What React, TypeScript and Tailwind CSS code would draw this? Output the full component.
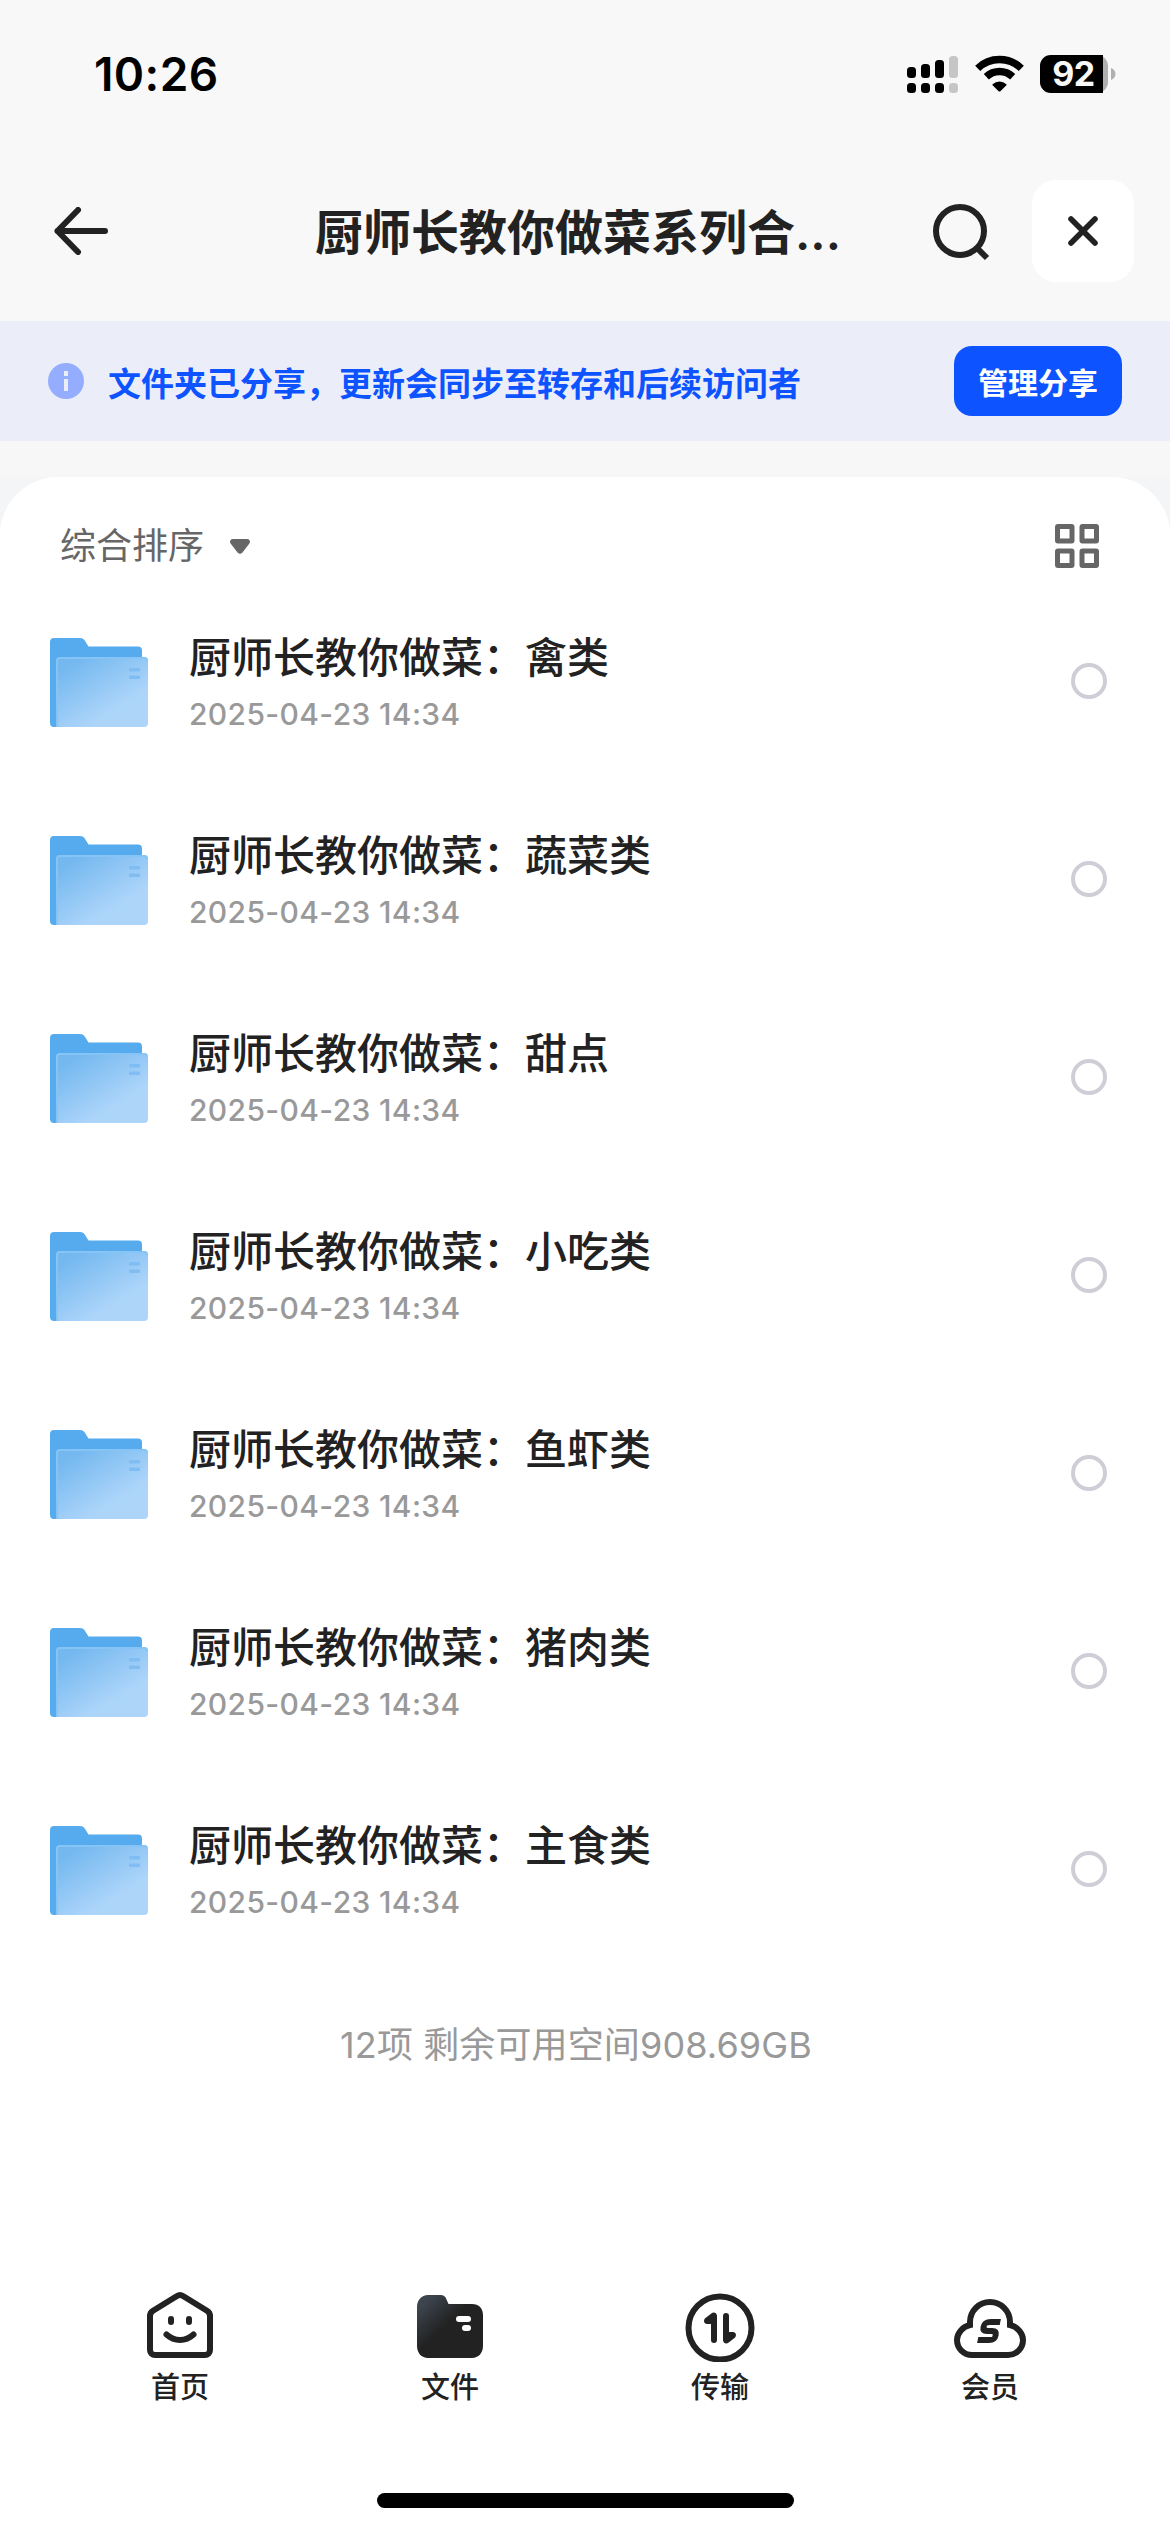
import React from "react";

const INK = "#222222";

function SignalIcon() {
  return (
    <svg width="52" height="38" viewBox="0 0 52 38">
      <rect x="0" y="12" width="9" height="11" rx="3.5" />
      <rect x="14" y="9" width="9" height="14" rx="3.5" />
      <rect x="28" y="5" width="9" height="18" rx="3.5" />
      <rect x="42" y="1" width="9" height="22" rx="3.5" fill="#c6c6c6" />
      <rect x="0" y="28" width="9" height="10" rx="3.5" />
      <rect x="14" y="28" width="9" height="10" rx="3.5" />
      <rect x="28" y="28" width="9" height="10" rx="3.5" />
      <rect x="42" y="28" width="9" height="10" rx="3.5" fill="#c6c6c6" />
    </svg>
  );
}

function WifiIcon() {
  return (
    <svg width="50" height="38" viewBox="0 0 50 38">
      <path d="M2.7 13.3a31.5 31.5 0 0 1 43.6 0" fill="none" stroke="#000" strokeWidth="7.4" />
      <path d="M11.3 21.8a19.2 19.2 0 0 1 26.4 0" fill="none" stroke="#000" strokeWidth="7.4" />
      <path d="M17.6 29.2a10.2 10.2 0 0 1 13.8 0c.4.4.3.7 0 1.1l-6 5.9c-.6.5-1.2.5-1.8 0l-6-5.9c-.3-.4-.4-.7 0-1.1z" />
    </svg>
  );
}

function Battery() {
  return (
    <div className="flex items-center gap-[3px]">
      <div className="flex h-[38px] w-[68px] items-center rounded-[11px] bg-[#b0b0b0]">
        <div className="flex h-[38px] w-[63px] items-center justify-center rounded-l-[11px] bg-black pl-[4px] font-[Inter,sans-serif] text-[34px] font-bold leading-[38px] tracking-[-0.5px] text-[#f8f8f8]">
          92
        </div>
      </div>
      <svg width="5" height="12" viewBox="0 0 5 12">
        <path d="M0 0c2.600 1 4.500 3.200 4.500 6s-1.900 5-4.500 6z" fill="#b0b0b0" />
      </svg>
    </div>
  );
}

function BackIcon() {
  return (
    <svg width="54" height="48" viewBox="0 0 54 48" fill="none" stroke={INK} strokeWidth="6" strokeLinecap="round" strokeLinejoin="round">
      <path d="M51 24H3.500M24 3 3.500 24 24 45" />
    </svg>
  );
}

function SearchIcon() {
  return (
    <svg width="58" height="58" viewBox="0 0 58 58" fill="none" stroke={INK} strokeWidth="6">
      <circle cx="27" cy="27" r="24" />
      <path d="m44 44 10 10" />
    </svg>
  );
}

function CloseIcon() {
  return (
    <svg width="30" height="30" viewBox="0 0 30 30" fill="none" stroke={INK} strokeWidth="5.600" strokeLinecap="round">
      <path d="m3 3 24 24M27 3 3 27" />
    </svg>
  );
}

function InfoIcon() {
  return (
    <svg width="36" height="36" viewBox="0 0 36 36">
      <circle cx="18" cy="18" r="18" fill="#94adff" />
      <rect x="16" y="8" width="4" height="5" fill="#ebeef9" />
      <rect x="16" y="16" width="4" height="12" fill="#ebeef9" />
    </svg>
  );
}

function GridIcon() {
  return (
    <svg width="44" height="44" viewBox="0 0 44 44" fill="none" stroke="#666" strokeWidth="5">
      <rect x="2.500" y="2.500" width="14.500" height="14.500" rx="0.500" />
      <rect x="27" y="2.500" width="14.500" height="14.500" rx="0.500" />
      <rect x="2.500" y="27" width="14.500" height="14.500" rx="0.500" />
      <rect x="27" y="27" width="14.500" height="14.500" rx="0.500" />
    </svg>
  );
}

function FolderIcon() {
  return (
    <svg width="98" height="90" viewBox="0 0 98 90">
      <defs>
        <linearGradient id="front" x1="0.15" y1="0.1" x2="0.85" y2="0.95">
          <stop offset="0" stopColor="#74b8ef" />
          <stop offset="0.75" stopColor="#add5fa" />
          <stop offset="1" stopColor="#add5fa" />
        </linearGradient>
      </defs>
      <path d="M0 4a4 4 0 0 1 4-4h26c2 0 3.400.8 4.600 2.300L38.500 8.500H88a4 4 0 0 1 4 4V60L8 89H4a4 4 0 0 1-4-4z" fill="#55abee" />
      <path d="M6 23a4 4 0 0 1 4-4h84a4 4 0 0 1 4 4v62a4 4 0 0 1-4 4H6z" fill="url(#front)" />
      <path d="M7 89V23a3 3 0 0 1 3-3h84a3 3 0 0 1 3 3" fill="none" stroke="#86c4f5" strokeWidth="2" />
      <rect x="79" y="30" width="11" height="3.500" rx="0.800" fill="#7fbdf2" />
      <rect x="79" y="37.500" width="11" height="3.500" rx="0.800" fill="#7fbdf2" />
    </svg>
  );
}

function HomeTabIcon() {
  return (
    <svg width="72" height="72" viewBox="0 0 72 72" fill="none" stroke={INK} strokeWidth="6" strokeLinecap="round" strokeLinejoin="round">
      <path d="M33 6a5.500 5.500 0 0 1 6 0L63 20.700c2 1.300 3 2.900 3 5.200V60a5 5 0 0 1-5 5H11a5 5 0 0 1-5-5V25.900c0-2.300 1-3.900 3-5.200z" />
      <path d="M22.500 44.500c8 7.300 19 7.300 27 0" />
      <path d="M27 29v3M45 29v3" />
    </svg>
  );
}

function FilesTabIcon() {
  return (
    <svg width="72" height="72" viewBox="0 0 72 72">
      <defs>
        <linearGradient id="files" x1="0.05" y1="0.1" x2="0.5" y2="0.55">
          <stop offset="0.1" stopColor="#3c444d" />
          <stop offset="0.85" stopColor="#222222" />
        </linearGradient>
      </defs>
      <path d="M3 17C3 10 7.500 5 14 5h12.500c3 0 4.800 1.300 5.800 4L34.500 14H58c7 0 11 4.500 11 11v31c0 7-4.500 12-11 12H14C7.500 68 3 63 3 56z" fill="url(#files)" />
      <rect x="42" y="26" width="15" height="6" rx="3" fill="#fff" />
      <rect x="48" y="35" width="9" height="6" rx="3" fill="#fff" />
    </svg>
  );
}

function TransferTabIcon() {
  return (
    <svg width="72" height="72" viewBox="0 0 72 72">
      <circle cx="36" cy="38" r="31.500" fill="none" stroke={INK} strokeWidth="6" />
      <path d="M27.300 23.500 21.500 28c-2.600 2-1.500 6 1.500 6h4v16a3 3 0 0 0 6 0V26c0-3.200-3.300-4.500-5.700-2.500z" fill={INK} />
      <path d="M44.700 52.500 50.500 48c2.600-2 1.500-6-1.500-6h-4V26a3 3 0 0 0-6 0v24c0 3.200 3.300 4.500 5.700 2.500z" fill={INK} />
    </svg>
  );
}

function MemberTabIcon() {
  return (
    <svg width="72" height="72" viewBox="0 0 72 72" fill="none" stroke={INK} strokeWidth="6">
      <path d="M16 35v-3a20 20 0 0 1 40 0v3c7 1.500 13 8 13 15a15 15 0 0 1-15 15H18A15 15 0 0 1 3 50c0-7 6-13.500 13-15z" />
      <path d="M44.500 32H34.500c-4 0-5.800 1.300-5.800 4.500S30.500 41 33.500 41h4c3.500 0 5 1.300 5 4.500S41 50 37.500 50H25.500" transform="translate(8.200 0) skewX(-11.300)" />
    </svg>
  );
}

const folders = ["禽类", "蔬菜类", "甜点", "小吃类", "鱼虾类", "猪肉类", "主食类"];

const tabs = [
  { label: "首页", Icon: HomeTabIcon },
  { label: "文件", Icon: FilesTabIcon },
  { label: "传输", Icon: TransferTabIcon },
  { label: "会员", Icon: MemberTabIcon },
];

export default function App() {
  return (
    <div className="flex h-[2532px] w-[1170px] flex-col overflow-hidden bg-[#f4f5f7] font-['Noto_Sans_CJK_SC',sans-serif] text-[#222222]">
      <header className="h-[321px] shrink-0 bg-[#f8f8f8]">
        <div className="flex h-[148px] items-center justify-between pl-[94px] pr-[54px]">
          <span className="font-[Inter,sans-serif] text-[46px] font-semibold leading-[56px] tracking-[0.4px] text-black">10:26</span>
          <div className="flex items-center">
            <SignalIcon />
            <div className="ml-[16px]">
              <WifiIcon />
            </div>
            <div className="ml-[15px]">
              <Battery />
            </div>
          </div>
        </div>
        <div className="mt-[32px] flex h-[102px] items-center pl-[54px] pr-9">
          <BackIcon />
          <h1 className="ml-[207px] w-[539px] whitespace-nowrap text-[48px] font-bold leading-[72px]">
            厨师长教你做菜系列合<span className="font-[Inter,sans-serif] font-semibold">...</span>
          </h1>
          <div className="ml-[79px] mt-1">
            <SearchIcon />
          </div>
          <button className="ml-auto flex h-[102px] w-[102px] items-center justify-center rounded-[24px] bg-white">
            <CloseIcon />
          </button>
        </div>
      </header>

      <section className="flex h-[120px] shrink-0 items-center bg-[#ebeef9] pl-12 pr-12">
        <InfoIcon />
        <p className="ml-6 mt-[2px] text-[33px] font-bold leading-[48px] text-[#0d53ff]">文件夹已分享，更新会同步至转存和后续访问者</p>
        <button className="ml-auto flex h-[70px] w-[168px] items-center justify-center rounded-[18px] bg-[#0d53ff] pb-px text-[30px] font-bold leading-[40px] text-white">
          管理分享
        </button>
      </section>
      <div className="h-9 shrink-0 bg-[#f7f7f7]" />

      <main className="flex flex-1 flex-col rounded-t-[58px] bg-white">
        <div className="flex h-[138px] items-center justify-between pl-[60px] pr-[71px]">
          <div className="flex items-center gap-[26px] text-[36px] leading-[48px] text-[#666666]">
            <span className="-mt-1.5">综合排序</span>
            <svg width="20" height="15" viewBox="0 0 20 15" className="mt-px">
              <path d="M3 0h14c2.800 0 4 3 2 5l-6.500 8.500c-1.500 1.700-3.500 1.700-5 0L1 5C-1 3 .2 0 3 0z" fill="#666" />
            </svg>
          </div>
          <GridIcon />
        </div>

        <ul className="flex flex-col">
          {folders.map((name) => (
            <li key={name} className="flex h-[198px] items-start pl-[50px] pr-[63px]">
              <div className="pt-[23px]">
                <FolderIcon />
              </div>
              <div className="ml-[41px] flex flex-col pt-[8px]">
                <span className="text-[42px] font-medium leading-[63px]">厨师长教你做菜：{name}</span>
                <span className="mt-[10px] font-[Inter,sans-serif] text-[30px] font-medium leading-[36px] tracking-[0.36px] text-[#999999]">
                  2025-04-23 14:34
                </span>
              </div>
              <span className="ml-auto mt-[48px] h-9 w-9 rounded-full border-4 border-[#cfced6]" />
            </li>
          ))}
        </ul>

        <p className="mr-[18px] mt-[17px] text-center font-[Inter,'Noto_Sans_CJK_SC',sans-serif] text-[36px] leading-[54px] tracking-[0.12px] text-[#999999]">
          12项 剩余可用空间908.69GB
        </p>

        <nav className="mt-auto grid grid-cols-4 px-[45px]">
          {tabs.map(({ label, Icon }) => (
            <div key={label} className="flex flex-col items-center">
              <Icon />
              <span className="mt-px text-[29px] font-medium leading-[44px]">{label}</span>
            </div>
          ))}
        </nav>
        <div className="mb-6 mt-[86px] h-[15px] w-[417px] self-center rounded-full bg-black" />
      </main>
    </div>
  );
}
